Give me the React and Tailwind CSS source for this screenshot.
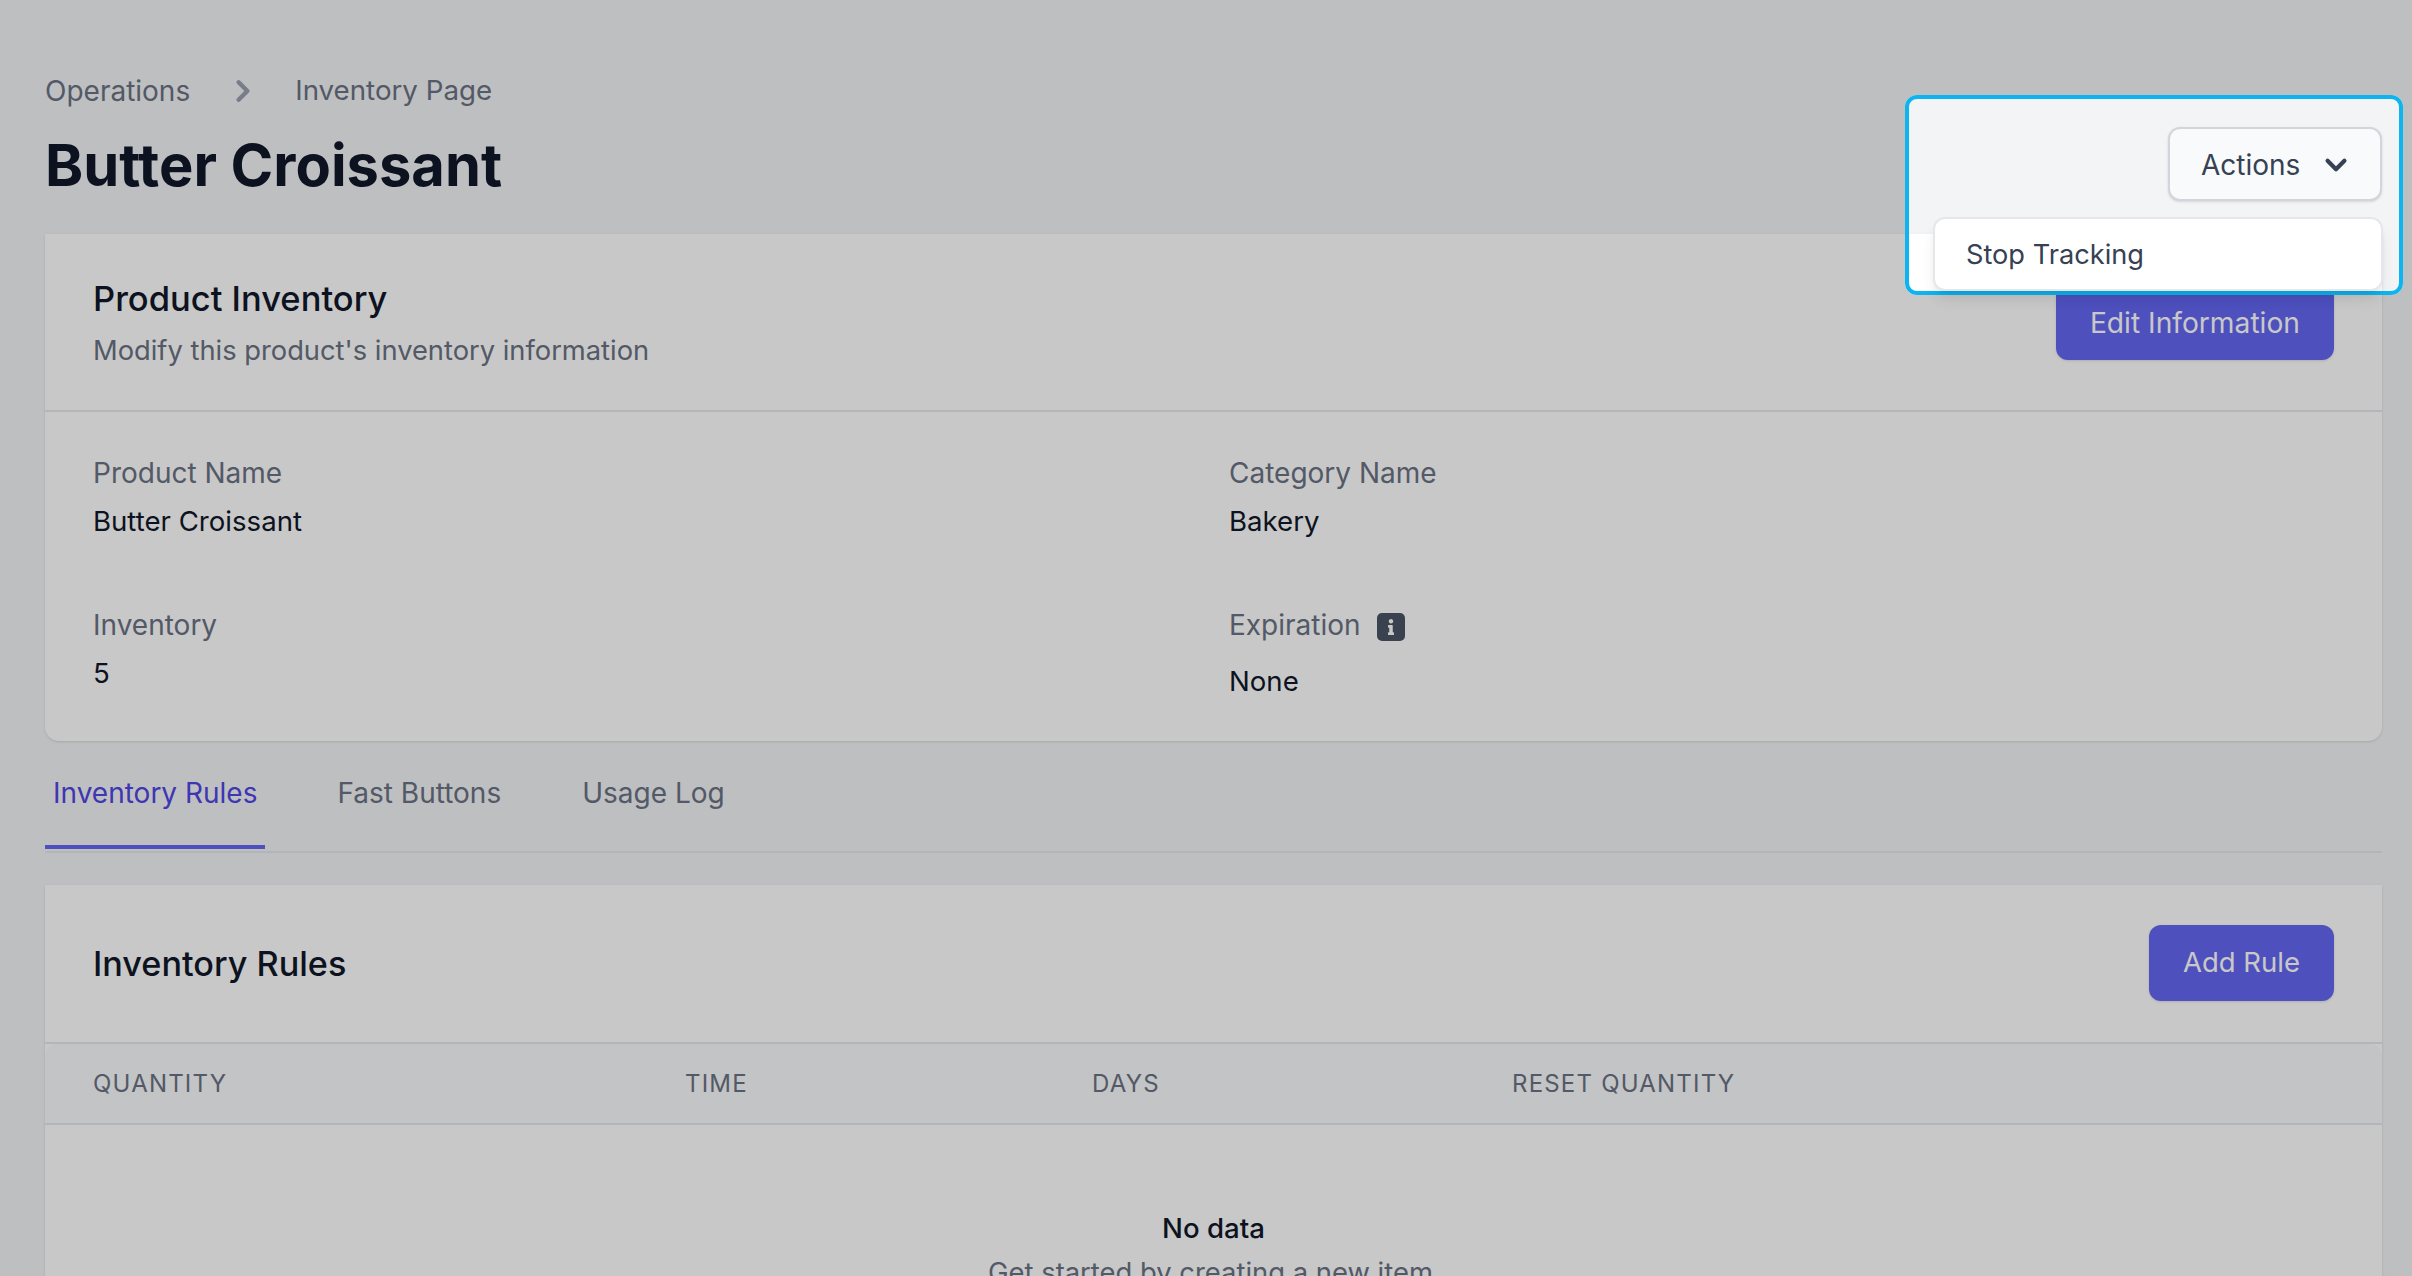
import { HiChevronDown, HiChevronRight } from "react-icons/hi";
import { FaInfo } from "react-icons/fa";

function Field({ label, value, info }) {
  return (
    <div>
      <div className="flex items-center h-[40px] text-[28px] text-gray-500">
        {label}
        {info && (
          <span className="ml-[16px] mt-[4px] flex items-center justify-center w-[28px] h-[28px] rounded-[5px] bg-gray-600 text-white">
            <FaInfo size={16} />
          </span>
        )}
      </div>
      <div className={`${info ? "mt-[16px]" : "mt-[8px]"} h-[40px] leading-[40px] text-[27.6px] text-gray-900`}>{value}</div>
    </div>
  );
}

export default function App() {
  return (
    <div
      className="relative h-[1276px] w-[2412px] overflow-hidden bg-gray-100 pl-[45px] pr-[30px]"
      style={{ fontFamily: "Inter, sans-serif" }}
    >
      <header className="flex items-end justify-between mb-[33px] pt-[70px]">
        <div>
          <nav className="flex items-center h-[42px] text-[28px] text-gray-500">
            <span>Operations</span>
            <HiChevronRight size={44} className="ml-[31px] mr-[30px] text-gray-400" />
            <span className="text-[27.7px]">Inventory Page</span>
          </nav>
          <h1 className="mt-[17px] h-[72px] leading-[72px] text-[57.8px] font-bold text-gray-900">Butter Croissant</h1>
        </div>
        <div className="relative">
          <button className="flex items-center w-[214px] h-[74px] pl-[31px] pt-[2px] rounded-[12px] border-2 border-gray-300 bg-gray-50 text-[28px] text-gray-700 shadow-sm">
            Actions
            <HiChevronDown size={42} className="ml-[15px]" />
          </button>
        </div>
      </header>

      <section className="rounded-b-[14px] bg-white shadow">
        <div className="flex items-center justify-between h-[178px] px-[48px] border-b-2 border-gray-200">
          <div>
            <h2 className="text-[34.5px] leading-[50px] font-medium text-gray-900">Product Inventory</h2>
            <p className="mt-[7px] text-[27.3px] leading-[40px] text-gray-500">Modify this product's inventory information</p>
          </div>
          <button className="h-[75px] mt-[1px] px-[34px] pt-[2px] rounded-[12px] bg-[#6366f1] text-[28.2px] text-white shadow-sm">Edit Information</button>
        </div>
        <div className="grid grid-cols-[1136px_1fr] content-start gap-y-[64px] h-[329px] px-[48px] pt-[41px]">
          <Field label="Product Name" value="Butter Croissant" />
          <Field label="Category Name" value="Bakery" />
          <Field label="Inventory" value="5" />
          <Field label="Expiration" value="None" info />
        </div>
      </section>

      <div className="flex h-[112px] border-b-2 border-gray-200">
        <button className="h-[108px] px-[8px] pb-[1px] border-b-4 border-[#6366f1] text-[28px] text-[#4f46e5]">Inventory Rules</button>
        <button className="h-[108px] px-[8px] pb-[5px] ml-[64px] text-[28px] text-gray-500">Fast Buttons</button>
        <button className="h-[108px] px-[8px] pb-[5px] ml-[65px] text-[28px] text-gray-500">Usage Log</button>
      </div>

      <section className="mt-[32px] bg-white shadow">
        <div className="flex items-center justify-between h-[159px] px-[48px] border-b-2 border-gray-200">
          <h2 className="text-[34.2px] font-medium text-gray-900">Inventory Rules</h2>
          <button className="h-[76px] mb-[2px] px-[34px] rounded-[12px] bg-[#6366f1] text-[27.5px] text-white shadow-sm">Add Rule</button>
        </div>
        <div className="grid grid-cols-[592px_407px_420px_1fr] items-center h-[81px] px-[48px] rounded-t-[12px] border-b-2 border-gray-200 bg-gray-50 text-[24px] tracking-wider text-gray-500 uppercase">
          <div>Quantity</div>
          <div>Time</div>
          <div>Days</div>
          <div>Reset Quantity</div>
        </div>
        <div className="flex flex-col items-center pt-[83px]">
          <h3 className="text-[27.6px] leading-[40px] font-medium text-gray-900">No data</h3>
          <p className="mt-[4px] mr-[6px] text-[27.4px] leading-[40px] text-gray-500">Get started by creating a new item</p>
        </div>
      </section>

      {/* tour highlight, the big shadow dims the rest of the page */}
      <div className="absolute left-[1905px] top-[95px] w-[498px] h-[200px] rounded-[12px] border-4 border-[#0cb5f0] shadow-[0_0_0_4000px_rgba(0,0,0,0.216)]"></div>

      <div className="absolute left-[1933px] top-[217px] w-[450px] h-[74px] flex items-center pl-[31px] pt-[2px] rounded-[12px] border-2 border-gray-200 bg-white text-[27.2px] text-gray-700 shadow-lg">
        Stop Tracking
      </div>
    </div>
  );
}
